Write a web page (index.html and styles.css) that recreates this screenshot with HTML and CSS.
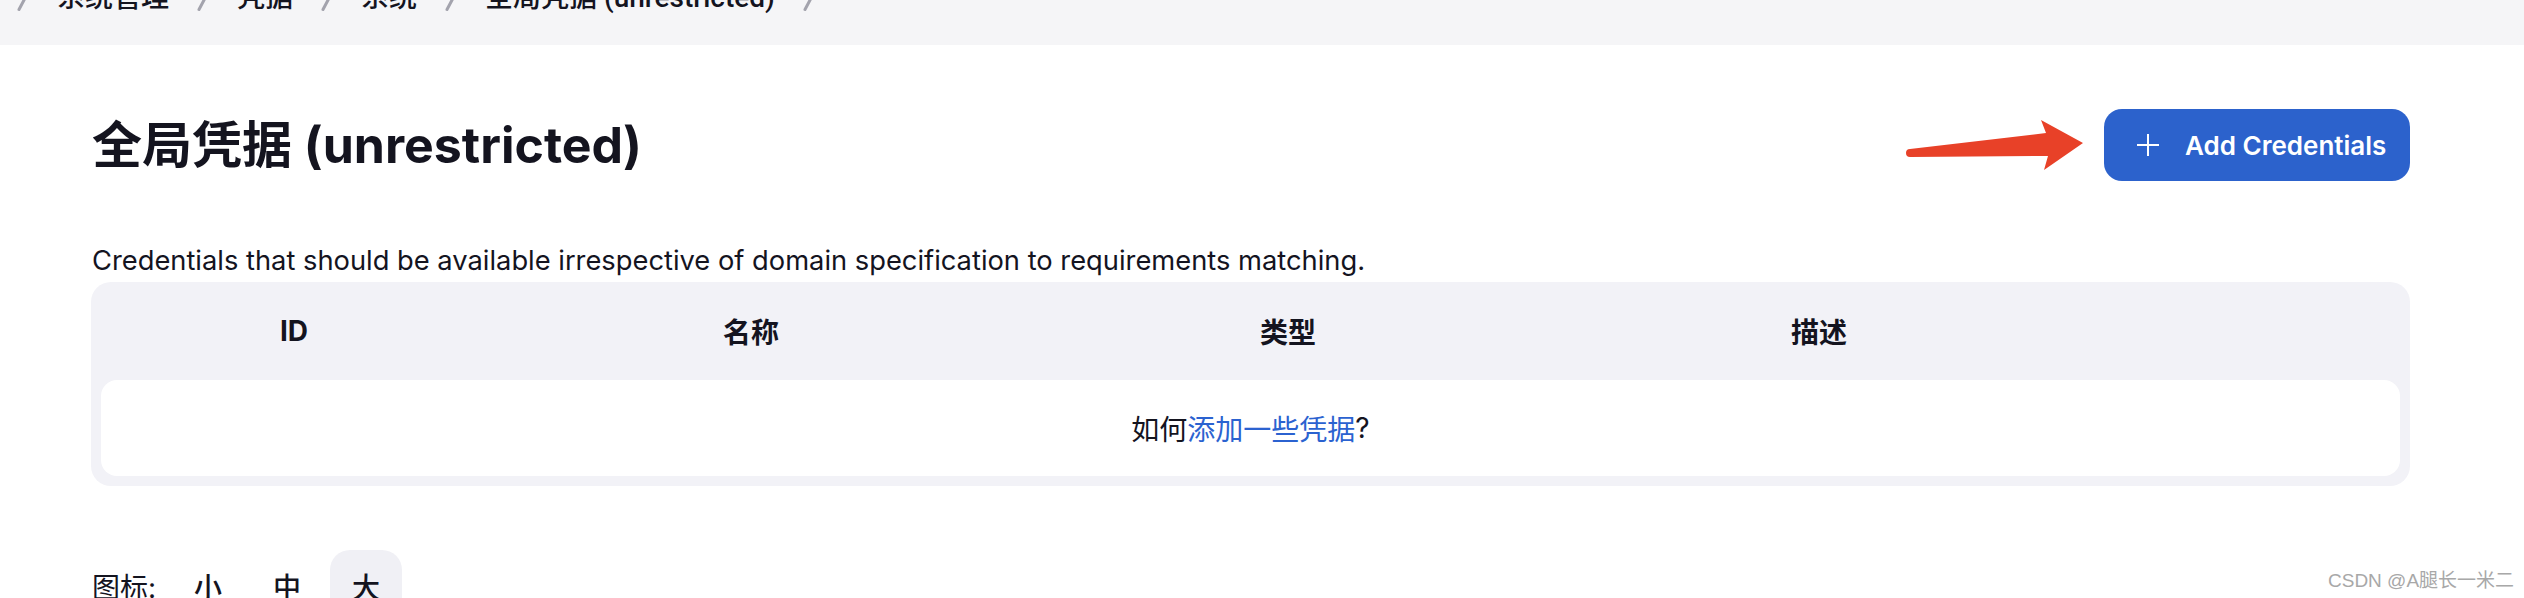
FILE: index.html
```html
<!DOCTYPE html>
<html lang="zh-CN">
<head>
<meta charset="utf-8">
<title>全局凭据 (unrestricted)</title>
<link rel="stylesheet" href="styles.css">
</head>
<body>
<nav class="breadcrumb-bar">
  <ul class="breadcrumbs">
    <li class="sep"></li>
    <li class="crumb">系统管理</li>
    <li class="sep"></li>
    <li class="crumb">凭据</li>
    <li class="sep"></li>
    <li class="crumb">系统</li>
    <li class="sep"></li>
    <li class="crumb">全局凭据 (unrestricted)</li>
    <li class="sep"></li>
  </ul>
</nav>

<main class="content">
  <header class="page-header">
    <h1 class="page-title">全局凭据 (unrestricted)</h1>
    <button class="btn-primary" type="button">
      <svg class="plus" width="22" height="22" viewBox="0 0 22 22" aria-hidden="true">
        <path d="M11 0 V22 M0 11 H22" stroke="#fff" stroke-width="2" fill="none"/>
      </svg>
      <span>Add Credentials</span>
    </button>
  </header>

  <p class="description">Credentials that should be available irrespective of domain specification to requirements matching.</p>

  <section class="cred-table">
    <div class="cred-head">
      <div class="col">ID</div>
      <div class="col">名称</div>
      <div class="col">类型</div>
      <div class="col">描述</div>
      <div class="col"></div>
    </div>
    <div class="cred-empty">如何<a class="link" href="#">添加一些凭据</a>?</div>
  </section>

  <div class="icon-size">
    <span class="icon-label">图标:</span>
    <span class="size-opt">小</span>
    <span class="size-opt">中</span>
    <span class="size-opt active">大</span>
  </div>
</main>

<svg class="annot-arrow" width="190" height="60" viewBox="0 0 190 60" aria-hidden="true">
  <path d="M10 34 L146 18 L141 5 L183 28 L144 55 L148 41 L10 42 A4 4 0 0 1 10 34 Z" fill="#e84128"/>
</svg>

<div class="watermark">CSDN @A腿长一米二</div>
</body>
</html>
```

FILE: styles.css
```css
html, body {
  margin: 0;
  padding: 0;
  background: #ffffff;
}

body {
  font-family: "Inter", "Noto Sans CJK SC", sans-serif;
  color: #14141f;
  width: 2524px;
  height: 598px;
  overflow: hidden;
  position: relative;
}

.breadcrumb-bar {
  height: 45px;
  background: #f5f5f7;
  overflow: hidden;
}

.breadcrumbs {
  list-style: none;
  margin: -16px 0 0 0;
  padding: 0 0 0 19px;
  display: flex;
  align-items: center;
  gap: 30px;
  font-family: "Roboto", "Noto Sans CJK SC", sans-serif;
  font-size: 28px;
  line-height: 28px;
  font-weight: 500;
  color: #14141f;
}

.sep {
  width: 8px;
  height: 26px;
  position: relative;
}

.sep::before {
  content: "";
  position: absolute;
  left: 3px;
  top: 5px;
  width: 2.5px;
  height: 22px;
  background: #a3a3ad;
  border-radius: 2px;
  transform: rotate(28deg);
}

.content {
  padding: 0 114px 0 91px;
}

.page-header {
  display: flex;
  align-items: center;
  justify-content: space-between;
  margin-top: 64px;
  height: 72px;
}

.page-title {
  margin: 0;
  font-size: 50px;
  line-height: 60px;
  font-weight: 700;
  color: #14141f;
  padding-left: 1px;
}

.btn-primary {
  display: flex;
  align-items: center;
  gap: 26px;
  width: 306px;
  height: 72px;
  padding: 0 0 0 33px;
  border: none;
  border-radius: 18px;
  background: #2c62cc;
  color: #ffffff;
  font-family: "Inter", "Noto Sans CJK SC", sans-serif;
  font-size: 26px;
  font-weight: 600;
  box-sizing: border-box;
}

.plus {
  display: block;
  flex: none;
}

.description {
  margin: 60px 0 0 0;
  font-size: 27.3px;
  line-height: 40px;
  color: #14141f;
  padding-left: 1px;
}

.cred-table {
  margin-top: 1px;
  background: #f2f2f7;
  border-radius: 20px;
  padding: 0 10px 10px 10px;
}

.cred-head {
  display: grid;
  grid-template-columns: 386px 528px 546px 516px 1fr;
  height: 98px;
  align-items: center;
  font-size: 28px;
  font-weight: 700;
  color: #14141f;
}

.col {
  text-align: center;
}

.cred-empty {
  background: #ffffff;
  border-radius: 16px;
  height: 96px;
  display: flex;
  align-items: center;
  justify-content: center;
  font-size: 28px;
  color: #14141f;
}

.link {
  color: #2b62d0;
  text-decoration: none;
}

.icon-size {
  display: flex;
  align-items: center;
  margin-top: 64px;
  height: 72px;
  font-size: 28px;
  color: #14141f;
}

.icon-label {
  margin-right: 16px;
  padding-left: 1px;
}

.size-opt {
  width: 72px;
  height: 72px;
  display: flex;
  align-items: center;
  justify-content: center;
  border-radius: 20px;
  margin-right: 7px;
  font-weight: 500;
}

.size-opt.active {
  background: #f0f0f5;
}

.annot-arrow {
  position: absolute;
  left: 1900px;
  top: 115px;
}

.watermark {
  position: absolute;
  left: 2328px;
  top: 569px;
  font-family: "Liberation Sans", "Noto Sans CJK SC", sans-serif;
  font-size: 19px;
  line-height: 24px;
  color: #a8a8a8;
  text-shadow: 0 0 1px #ffffff;
  white-space: nowrap;
}
```
